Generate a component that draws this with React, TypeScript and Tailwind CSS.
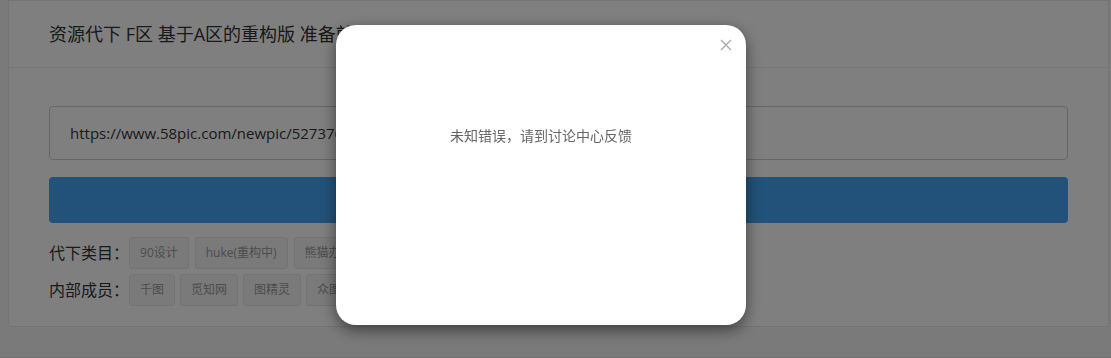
import React from "react";

const font = { fontFamily: '"Open Sans", "Noto Sans CJK SC", sans-serif' };

function Tag({ children }: { children: React.ReactNode }) {
  return (
    <span className="inline-flex h-[32px] items-center rounded-[3px] border border-[#e6e6e6] bg-[#f5f5f5] px-[10px] text-[12px] text-[#999]">
      {children}
    </span>
  );
}

export default function App() {
  const categories = ["90设计", "huke(重构中)", "熊猫办公", "包图网", "摄图网"];
  const members = ["千图", "觅知网", "图精灵", "众图网", "我图网"];

  return (
    <div className="relative h-[358px] overflow-hidden border-b border-[#e2e2e2] bg-[#f5f5f5]" style={font}>
      {/* Page */}
      <div className="ml-[8px] w-[1101px] border border-[#e8e8e8] bg-white">
        <div className="flex h-[67px] items-center border-b border-[#eeeeee] px-[40px] text-[18px] text-[#333]">
          资源代下 F区 基于A区的重构版 准备就绪
        </div>
        <div className="px-[40px] pb-[20px] pt-[38px]">
          <div className="flex h-[54px] items-center rounded-[4px] border border-[#cccccc] px-[20px] text-[15px] text-[#333]">
            https://www.58pic.com/newpic/52737683.html
          </div>
          <div className="mt-[17px] h-[46px] rounded-[4px] bg-[#44a5f3]" />
          <div className="mt-[14px] flex items-center">
            <span className="text-[16px] text-[#333]">代下类目：</span>
            <div className="flex gap-[6px]">
              {categories.map((c) => (
                <Tag key={c}>{c}</Tag>
              ))}
            </div>
          </div>
          <div className="mt-[5px] flex items-center">
            <span className="text-[16px] text-[#333]">内部成员：</span>
            <div className="flex gap-[5px]">
              {members.map((c) => (
                <Tag key={c}>{c}</Tag>
              ))}
            </div>
          </div>
        </div>
      </div>

      {/* Overlay */}
      <div className="fixed inset-0 bg-black/50">
        <div className="absolute left-[336px] top-[25px] flex h-[300px] w-[410px] flex-col items-center rounded-[20px] bg-white shadow-[0_5px_15px_rgba(0,0,0,0.5)]">
          <button className="absolute right-[13px] top-[13px] flex h-[14px] w-[14px] items-center justify-center text-[#aaa]">
            <svg width="12" height="12" viewBox="0 0 12 12" fill="none" stroke="currentColor" strokeWidth="1.3">
              <path d="M1 1L11 11M11 1L1 11" />
            </svg>
          </button>
          <p className="mt-[100px] text-[14px] text-[#666]">未知错误，请到讨论中心反馈</p>
        </div>
      </div>
    </div>
  );
}
